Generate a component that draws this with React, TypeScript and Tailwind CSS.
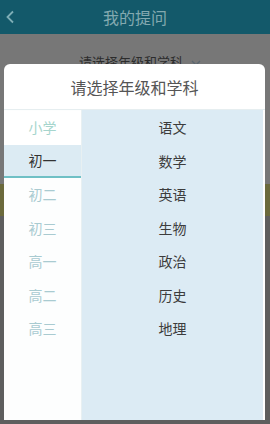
import React from "react";

const grades = ["小学", "初一", "初二", "初三", "高一", "高二", "高三"];
const subjects = ["语文", "数学", "英语", "生物", "政治", "历史", "地理"];

export default function App() {
  return (
    <div
      className="relative w-[270px] h-[424px] overflow-hidden bg-[#6a6a6a]"
      style={{ fontFamily: '"Noto Sans CJK SC", "Noto Sans", sans-serif' }}
    >
      {/* header */}
      <div className="relative h-[34px] bg-[#13596a] flex items-center justify-center">
        <svg className="absolute left-[5px] top-[10px]" width="10" height="14" viewBox="0 0 10 14">
          <polyline points="8,1.5 2.5,7 8,12.5" fill="none" stroke="#7eaeb6" strokeWidth="1.8" />
        </svg>
        <span className="text-[16px] text-[#83a9b0] leading-none">我的提问</span>
      </div>
      {/* underlying page */}
      <div className="h-[150px] bg-[#777777] flex flex-col">
        <div className="h-[34px] flex items-end justify-center pl-[10px]">
          <span className="text-[13px] text-[#2c2c2c] leading-none">请选择年级和学科</span>
          <svg className="ml-[8px] mb-[1px]" width="10" height="8" viewBox="0 0 10 8">
            <polyline points="1,2 5,6 9,2" fill="none" stroke="#5a6670" strokeWidth="1.3" />
          </svg>
        </div>
      </div>
      <div className="h-[32px] bg-[#6b6a3c]" />
      <div className="h-[208px] bg-[#5e5e5e]" />

      {/* modal */}
      <div className="absolute left-[4px] top-[64px] w-[261px] h-[356px] bg-white rounded-t-[6px] flex flex-col overflow-hidden">
        <div className="h-[46px] flex items-center justify-center border-b border-[#e6eef0]">
          <span className="text-[16px] text-[#555555] leading-none">请选择年级和学科</span>
        </div>
        <div className="flex-1 flex">
          <div className="w-[78px] bg-[#fdfefe] pt-[1px] border-r border-[#e8f0f2]">
            {grades.map((g, i) => (
              <div
                key={g}
                className={
                  i === 1
                    ? "h-[33.5px] flex items-center justify-center bg-[#dcebf3] border-b-2 border-[#6fc0c5] text-[14px] text-[#333333]"
                    : i === 0
                    ? "h-[33.5px] flex items-center justify-center bg-white text-[14px] text-[#a6d5cd]"
                    : "h-[33.5px] flex items-center justify-center text-[14px] text-[#a9cbd1]"
                }
              >
                {g}
              </div>
            ))}
          </div>
          <div className="flex-1 bg-[#dcebf4] mr-[2px] pt-[1px]">
            {subjects.map((s) => (
              <div key={s} className="h-[33.5px] flex items-center justify-center text-[14px] text-[#3c3c3c]">
                {s}
              </div>
            ))}
          </div>
        </div>
      </div>
    </div>
  );
}
